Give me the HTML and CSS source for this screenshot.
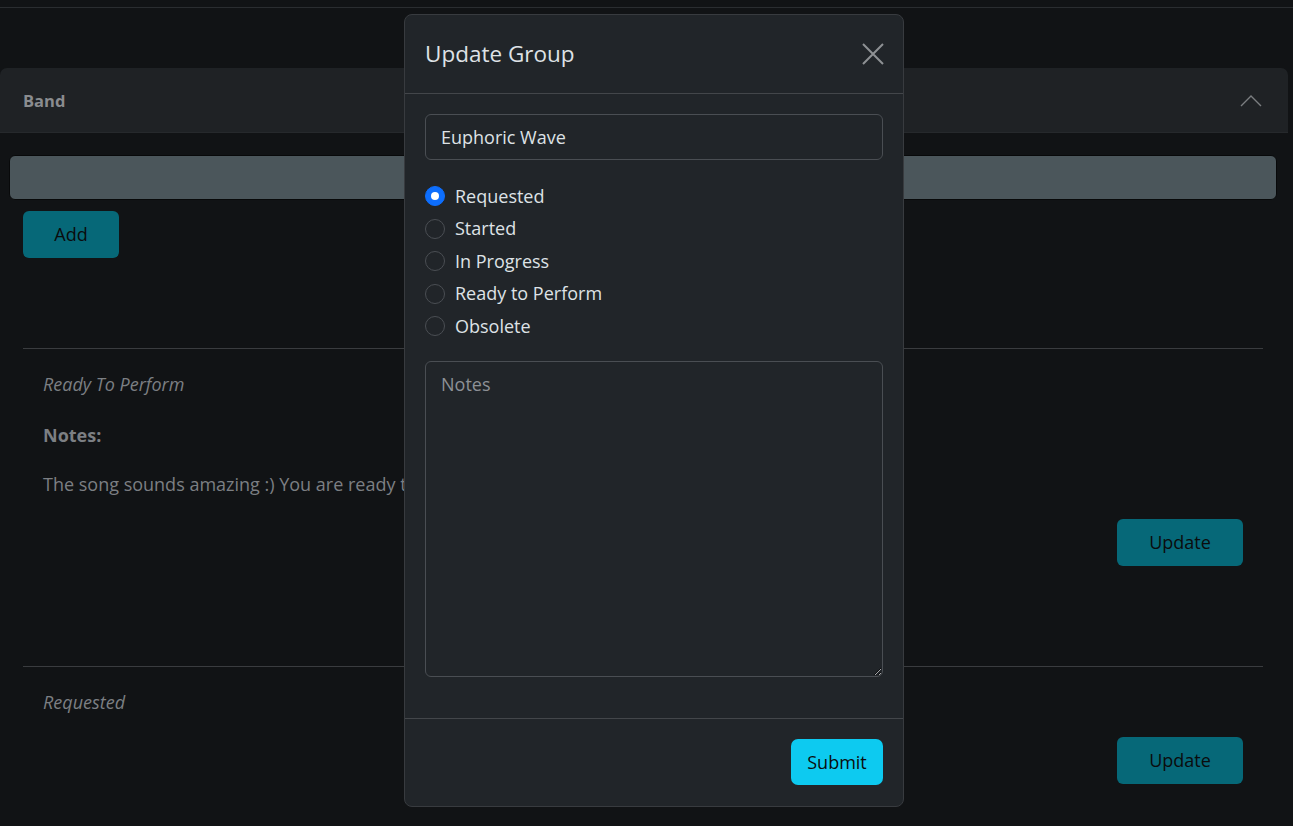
FILE: index.html
```html
<!DOCTYPE html>
<html lang="en">
<head>
<meta charset="utf-8">
<title>Update Group</title>
<link rel="stylesheet" href="styles.css">
</head>
<body>
<div class="topbar"></div>
<main class="page">
  <section class="accordion">
    <div class="acc-header">
      <span class="acc-title">Band</span>
      <svg class="chevron" width="22" height="13" viewBox="0 0 22 13"><path d="M1 12 L11 2 L21 12" fill="none" stroke="#7b7e81" stroke-width="1.4"/></svg>
    </div>
    <div class="acc-body">
      <div class="new-input"></div>
      <button class="btn btn-dim btn-add">Add</button>
      <ul class="items">
        <li class="item">
          <div class="status">Ready To Perform</div>
          <div class="notes-label">Notes:</div>
          <div class="notes-text">The song sounds amazing :) You are ready to perform!</div>
          <div class="actions"><button class="btn btn-dim btn-update">Update</button></div>
        </li>
        <li class="item">
          <div class="status">Requested</div>
          <div class="actions"><button class="btn btn-dim btn-update">Update</button></div>
        </li>
      </ul>
    </div>
  </section>
</main>

<div class="modal">
  <div class="modal-header">
    <h5 class="modal-title">Update Group</h5>
    <svg class="close" width="22" height="22" viewBox="0 0 22 22"><path d="M1 1 L21 21 M21 1 L1 21" stroke="#8e9194" stroke-width="2" fill="none"/></svg>
  </div>
  <div class="modal-body">
    <input class="form-control" type="text" value="Euphoric Wave">
    <div class="radios">
      <label class="check"><span class="radio checked"></span>Requested</label>
      <label class="check"><span class="radio"></span>Started</label>
      <label class="check"><span class="radio"></span>In Progress</label>
      <label class="check"><span class="radio"></span>Ready to Perform</label>
      <label class="check"><span class="radio"></span>Obsolete</label>
    </div>
    <textarea class="form-control notes" placeholder="Notes"></textarea>
  </div>
  <div class="modal-footer">
    <button class="btn btn-submit">Submit</button>
  </div>
</div>
</body>
</html>
```

FILE: styles.css
```css
* { box-sizing: border-box; }
html, body { margin: 0; padding: 0; }
body {
  background: #111315;
  font-family: "Open Sans", "Noto Sans", sans-serif;
  font-size: 18px;
  line-height: 27px;
  color: #7c7f83;
  width: 1293px;
  height: 826px;
  overflow: hidden;
  position: relative;
}
.topbar {
  height: 8px;
  border-bottom: 1px solid #2a2d30;
}
.page { padding-top: 60px; }
.accordion { width: 1288px; }
.acc-header {
  height: 65px;
  background: #1f2225;
  border-radius: 7px 7px 0 0;
  border-bottom: 1px solid #26292c;
  display: flex;
  align-items: center;
  justify-content: space-between;
  padding: 0 26px 0 23px;
}
.acc-title { font-weight: 700; font-size: 16.5px; color: #8a8c8f; }
.chevron { margin-top: 1px; }
.acc-body { padding-top: 22px; }
.new-input {
  margin-left: 9px;
  width: 1268px;
  height: 45px;
  background: #4b565b;
  border: 1px solid #08090a;
  border-radius: 6px;
}
.btn {
  font-family: inherit;
  font-size: 18px;
  line-height: 27px;
  border: none;
  border-radius: 6px;
  cursor: pointer;
}
.btn-dim { background: #066878; color: #0b0c0d; padding: 10px 0; }
.btn-add { margin: 11px 0 0 23px; width: 96px; }
.items {
  list-style: none;
  margin: 90px 0 0 23px;
  padding: 0;
  width: 1240px;
}
.item {
  border-top: 1px solid #3a3c3f;
  padding: 22px 20px 100px 20px;
}
.item:last-child { padding-bottom: 20px; }
.status { font-style: italic; }
.notes-label { font-weight: 700; margin-top: 24px; }
.notes-text { margin-top: 22px; }
.actions { display: flex; justify-content: flex-end; margin-top: 21px; }
.btn-update { width: 126px; }

/* modal */
.modal {
  position: absolute;
  left: 404px;
  top: 14px;
  width: 500px;
  height: 793px;
  background: #212529;
  border: 1px solid #383b3f;
  border-radius: 8px;
  color: #dee2e6;
}
.modal-header {
  height: 79px;
  border-bottom: 1px solid #43464a;
  display: flex;
  align-items: center;
  justify-content: space-between;
  padding: 0 19px 0 20px;
}
.modal-title {
  margin: 0;
  font-size: 22.5px;
  font-weight: 400;
  line-height: 30px;
  color: #dfe2e6;
}
.modal-body { padding: 20px; }
.form-control {
  display: block;
  width: 458px;
  font-family: inherit;
  font-size: 18px;
  line-height: 27px;
  color: #dee2e6;
  background: #212529;
  border: 1px solid #4a4e53;
  border-radius: 6px;
  padding: 9px 15px;
  outline: none;
}
input.form-control { height: 46px; }
.form-control::placeholder { color: #8d9196; }
.radios { margin-top: 20px; margin-bottom: 18.5px; }
.check {
  display: flex;
  align-items: center;
  height: 32.5px;
  gap: 10px;
}
.radio {
  width: 20px;
  height: 20px;
  border-radius: 50%;
  border: 1px solid #4a4e53;
  flex: none;
}
.radio.checked {
  background: #0d6efd;
  border-color: #0d6efd;
  position: relative;
}
.radio.checked::after {
  content: "";
  position: absolute;
  left: 5px; top: 5px;
  width: 8px; height: 8px;
  border-radius: 50%;
  background: #fff;
}
.notes {
  height: 316px;
  resize: vertical;
  margin-bottom: 21px;
  padding-top: 9px;
}
.modal-footer {
  border-top: 1px solid #43464a;
  padding: 20px 20px;
  display: flex;
  justify-content: flex-end;
}
.btn-submit {
  background: #0dcaf0;
  color: #0b0c0d;
  width: 92px;
  padding: 9.5px 0;
  border-radius: 7px;
}
```
